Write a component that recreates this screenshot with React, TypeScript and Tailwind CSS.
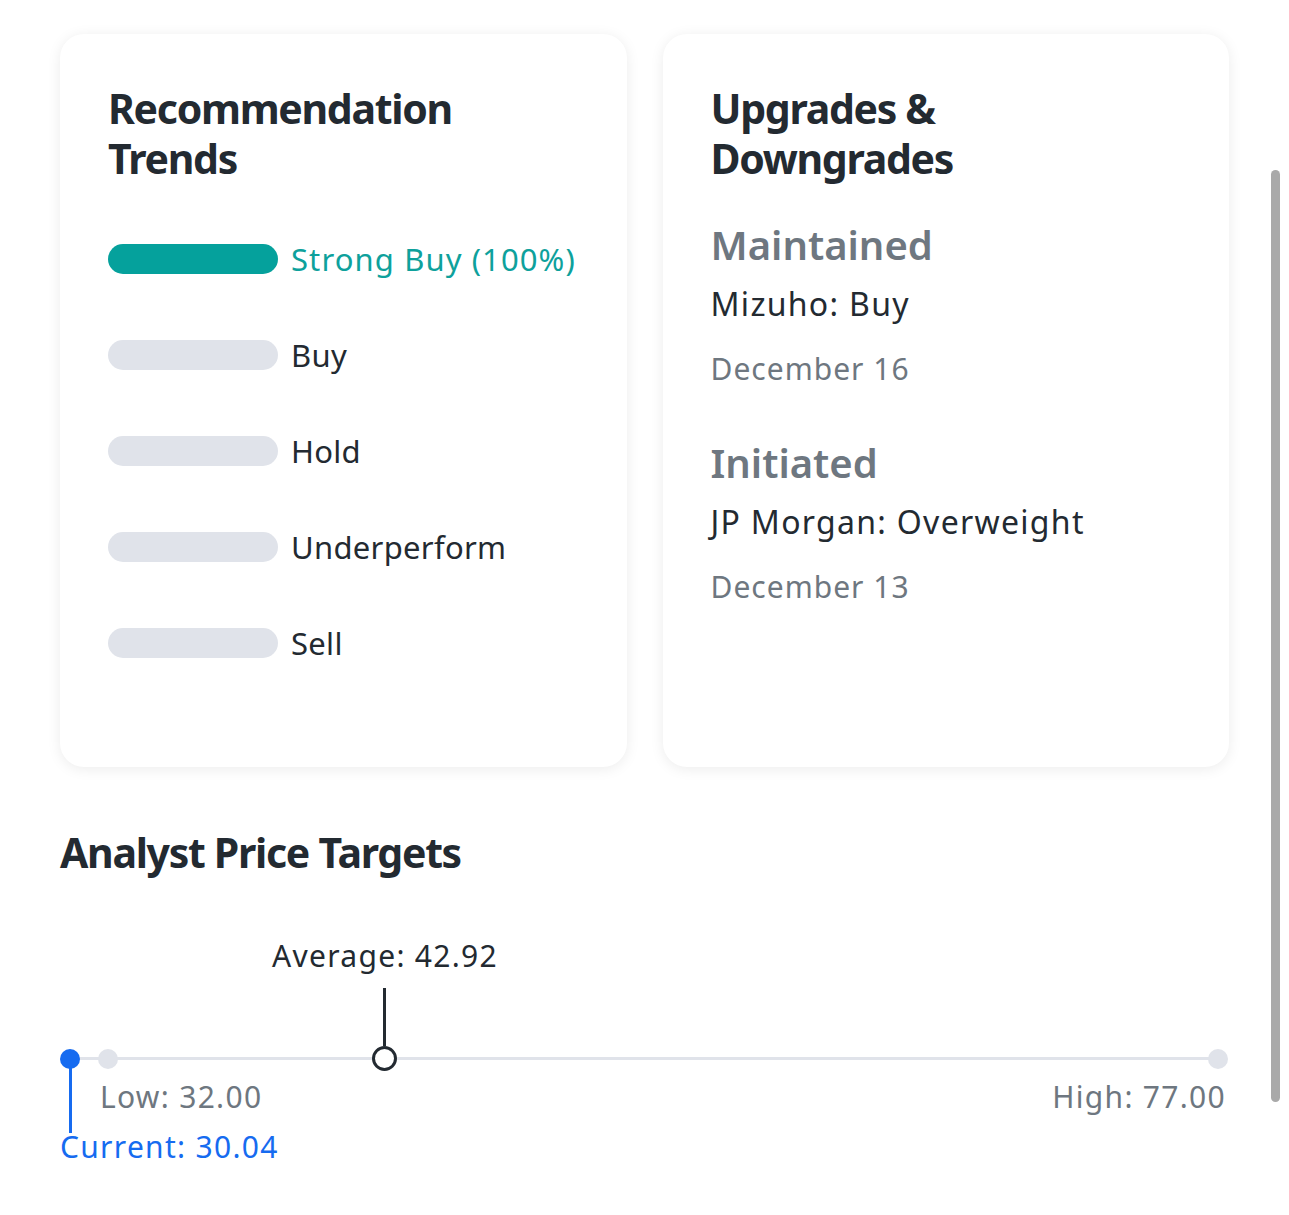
const trends = [
  { label: "Strong Buy (100%)", active: true },
  { label: "Buy", active: false },
  { label: "Hold", active: false },
  { label: "Underperform", active: false },
  { label: "Sell", active: false },
];

const changes = [
  { action: "Maintained", firm: "Mizuho: Buy", date: "December 16" },
  { action: "Initiated", firm: "JP Morgan: Overweight", date: "December 13" },
];

function CardTitle({ children }: { children: React.ReactNode }) {
  return <h2 className="text-[41px] font-bold leading-[50px] tracking-[-1.3px] text-[#232a31]">{children}</h2>;
}

function RecommendationTrends() {
  return (
    <div className="rounded-[24px] bg-white px-[48px] pb-[109px] pt-[49px] shadow-[0_2px_14px_rgba(0,0,0,0.08)]">
      <CardTitle>
        Recommendation
        <br />
        Trends
      </CardTitle>
      <div className="mt-[61px] flex flex-col gap-[66px]">
        {trends.map((t) => (
          <div key={t.label} className="flex h-[30px] items-center gap-[13px]">
            <div className={`h-[30px] w-[170px] shrink-0 rounded-full ${t.active ? "bg-[#05a19c]" : "bg-[#e0e3ea]"}`} />
            <span className={`whitespace-nowrap text-[31px] leading-[40px] ${t.active ? "tracking-[1.1px] text-[#0ea19c]" : "tracking-[0.3px] text-[#232a31]"}`}>{t.label}</span>
          </div>
        ))}
      </div>
    </div>
  );
}

function UpgradesDowngrades() {
  return (
    <div className="rounded-[24px] bg-white px-[48px] pt-[49px] shadow-[0_2px_14px_rgba(0,0,0,0.08)]">
      <CardTitle>
        Upgrades &amp;
        <br />
        Downgrades
      </CardTitle>
      <div className="mt-[38px] flex flex-col gap-[50px]">
        {changes.map((c) => (
          <div key={c.action}>
            <div className="text-[40px] font-semibold leading-[48px] text-[#6e7780]">{c.action}</div>
            <div className="mt-[15px] text-[32px] leading-[40px] tracking-[1.3px] text-[#232a31]">{c.firm}</div>
            <div className="mt-[25px] text-[30px] leading-[40px] tracking-[1px] text-[#6e7780]">{c.date}</div>
          </div>
        ))}
      </div>
    </div>
  );
}

function PriceTargets() {
  return (
    <div className="mt-[60px]">
      <CardTitle>Analyst Price Targets</CardTitle>
      {/* markers sit at their value along the track */}
      <div className="relative mt-[24px] h-[290px] text-[30px] leading-[40px] tracking-[1.3px]">
        <div className="absolute left-[10px] right-[11px] top-[156px] h-[3px] bg-[#e0e3ea]" />

        <div className="absolute left-[325px] top-[35px] -translate-x-1/2 whitespace-nowrap text-[#232a31]">Average: 42.92</div>
        <div className="absolute left-[323px] top-[87px] h-[58px] w-[3px] bg-[#232a31]" />
        <div className="absolute left-[312px] top-[145px] h-[25px] w-[25px] rounded-full border-[3px] border-[#232a31] bg-white" />

        <div className="absolute left-[38px] top-[148px] h-[20px] w-[20px] rounded-full bg-[#e0e3ea]" />
        <div className="absolute left-[40px] top-[176px] whitespace-nowrap text-[#6e7780]">Low: 32.00</div>

        <div className="absolute left-[1148px] top-[148px] h-[20px] w-[20px] rounded-full bg-[#e0e3ea]" />
        <div className="absolute right-[3px] top-[176px] whitespace-nowrap text-[#6e7780]">High: 77.00</div>

        <div className="absolute left-[9px] top-[157px] h-[75px] w-[3px] bg-[#166bf0]" />
        <div className="absolute left-0 top-[148px] h-[20px] w-[20px] rounded-full bg-[#166bf0]" />
        <div className="absolute left-0 top-[226px] whitespace-nowrap text-[#166bf0]">Current: 30.04</div>
      </div>
    </div>
  );
}

export default function App() {
  return (
    <div className="relative min-h-screen bg-white px-[60px] pt-[34px] font-['Noto_Sans',sans-serif]">
      <div className="grid grid-cols-2 gap-[36px]">
        <RecommendationTrends />
        <UpgradesDowngrades />
      </div>
      <PriceTargets />
      <div className="absolute right-[9px] top-[170px] h-[932px] w-[9px] rounded-full bg-[#a9a9a9]" />
    </div>
  );
}
